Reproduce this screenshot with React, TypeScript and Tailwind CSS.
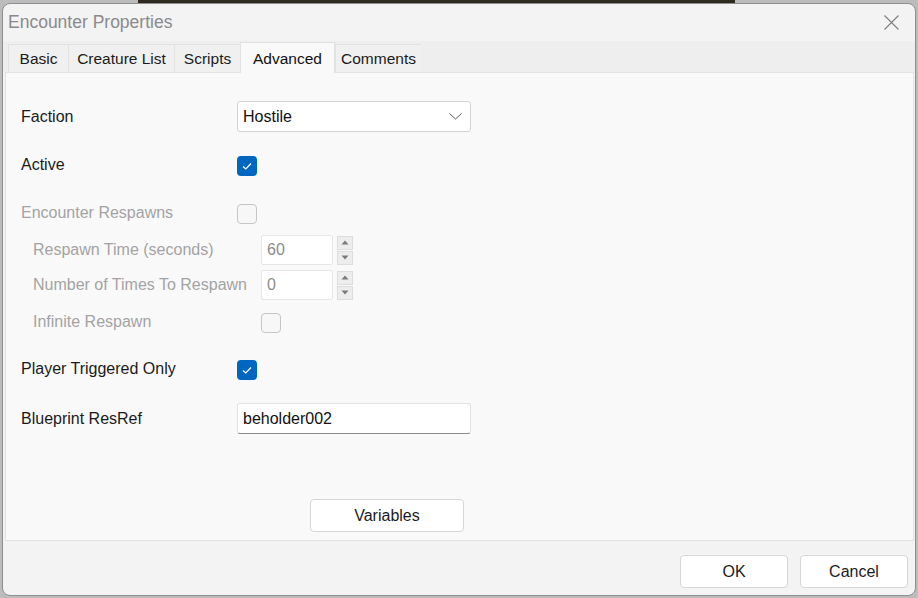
import React from "react";

const font = "font-['Liberation_Sans',Arial,sans-serif]";

function Check({ on, disabled }: { on?: boolean; disabled?: boolean }) {
  if (on) {
    return (
      <div className="w-[20px] h-[20px] rounded-[4px] bg-[#0067c0] flex items-center justify-center">
        <svg width="20" height="20" viewBox="0 0 20 20">
          <path d="M6 10.5 L8.8 13 L14 7.5" fill="none" stroke="#ffffff" strokeWidth="1.2" />
        </svg>
      </div>
    );
  }
  return (
    <div
      className={
        "w-[20px] h-[20px] rounded-[4px] border bg-[#f7f7f7] " +
        (disabled ? "border-[#c6c6c6]" : "border-[#8a8a8a]")
      }
    />
  );
}

function Spin({ value }: { value: string }) {
  return (
    <div className="flex items-center gap-[4px]">
      <div className="w-[72px] h-[30px] bg-white border border-[#e6e6e6] rounded-[2px] flex items-center pl-[5px] text-[16px] text-[#8c8c8c]">
        {value}
      </div>
      <div className="flex flex-col gap-[1px]">
        <div className="w-[16px] h-[14px] bg-[#ededed] border border-[#dddddd] flex items-center justify-center">
          <svg width="8" height="5" viewBox="0 0 8 5">
            <path d="M0.5 4.5 L4 0.5 L7.5 4.5 Z" fill="#7a7a7a" />
          </svg>
        </div>
        <div className="w-[16px] h-[14px] bg-[#ededed] border border-[#dddddd] flex items-center justify-center">
          <svg width="8" height="5" viewBox="0 0 8 5">
            <path d="M0.5 0.5 L4 4.5 L7.5 0.5 Z" fill="#7a7a7a" />
          </svg>
        </div>
      </div>
    </div>
  );
}

function Row({
  label,
  children,
  indent,
  disabled,
  check,
  className,
}: {
  label: string;
  children: React.ReactNode;
  indent?: boolean;
  disabled?: boolean;
  check?: boolean;
  className?: string;
}) {
  return (
    <div className={"flex items-center " + (className ?? "")}>
      <div
        className={
          (indent ? "w-[255px] pl-[27px] " : "w-[231px] pl-[15px] ") +
          (check ? "-top-[1px] " : "top-0 ") +
          "relative shrink-0 whitespace-nowrap text-[16px] leading-[20px] " +
          (disabled ? "text-[#a3a3a3]" : "text-[#1b1b1b]")
        }
      >
        {label}
      </div>
      {children}
    </div>
  );
}

const tabs = [
  { name: "Basic", w: "w-[60px]" },
  { name: "Creature List", w: "w-[106px]" },
  { name: "Scripts", w: "w-[66px]" },
  { name: "Advanced", w: "w-[95px]", active: true },
  { name: "Comments", w: "w-[86px]" },
];

export default function App() {
  return (
    <div className={"w-[918px] h-[598px] bg-[#bcbcbc] overflow-hidden " + font}>
      {/* strip of the picture behind the dialog */}
      <div className="h-[3px] flex">
        <div className="w-[138px]" />
        <div className="w-[597px] bg-[#2e2b1e]" />
      </div>

      <div className="ml-[2px] w-[914px] h-[593px] rounded-[8px] border border-[#8e8e8e] bg-[#f3f3f3] flex flex-col overflow-hidden">
        {/* title bar */}
        <div className="h-[37px] flex items-center justify-between pl-[5px] pr-[16px] shrink-0">
          <span className="text-[17.5px] text-[#8a8a8a]">Encounter Properties</span>
          <svg width="15" height="15" viewBox="0 0 15 15">
            <path d="M0.5 0.5 L14.5 14.5 M14.5 0.5 L0.5 14.5" stroke="#7f7f7f" strokeWidth="1.1" />
          </svg>
        </div>

        {/* tab strip */}
        <div className="h-[31px] bg-[#eeeeee] flex items-end pl-[5px] shrink-0">
          {tabs.map((t) =>
            t.active ? (
              <div
                key={t.name}
                className={
                  t.w +
                  " h-[31px] bg-[#f9f9f9] border-t border-x border-[#e2e2e2] flex items-start justify-center pt-[4px] text-[15.5px] text-[#111] relative top-[1px]"
                }
              >
                {t.name}
              </div>
            ) : (
              <div
                key={t.name}
                className={
                  t.w +
                  " h-[28px] bg-[#f0f0f0] border-t border-l border-[#e2e2e2] flex items-center justify-center pt-[1px] text-[15.5px] text-[#1b1b1b]"
                }
              >
                {t.name}
              </div>
            )
          )}
        </div>

        {/* page */}
        <div className="ml-[2px] mr-[1px] h-[469px] bg-[#f9f9f9] border border-[#e2e2e2] flex flex-col shrink-0">
          <Row label="Faction" className="mt-[28px]">
            <div className="w-[234px] h-[31px] bg-white border border-[#d3d3d3] rounded-[3px] flex items-center justify-between pl-[5px] pr-[8px] text-[16px] text-[#111]">
              <span>Hostile</span>
              <svg width="13" height="7" viewBox="0 0 13 7">
                <path d="M0.5 0.5 L6.5 6 L12.5 0.5" fill="none" stroke="#5a5a5a" strokeWidth="1" />
              </svg>
            </div>
          </Row>

          <Row label="Active" check className="mt-[24px]">
            <Check on />
          </Row>

          <Row label="Encounter Respawns" check disabled className="mt-[28px]">
            <Check disabled />
          </Row>

          <Row label="Respawn Time (seconds)" indent disabled className="mt-[11px]">
            <Spin value="60" />
          </Row>

          <Row label="Number of Times To Respawn" indent disabled className="mt-[5px]">
            <Spin value="0" />
          </Row>

          <Row label="Infinite Respawn" check indent disabled className="mt-[13px]">
            <Check disabled />
          </Row>

          <Row label="Player Triggered Only" check className="mt-[27px]">
            <Check on />
          </Row>

          <Row label="Blueprint ResRef" className="mt-[23px]">
            <div className="w-[234px] h-[31px] bg-white border border-[#e3e3e3] border-b-[#8a8a8a] rounded-[3px] flex items-center pl-[5px] text-[16px] text-[#111]">
              beholder002
            </div>
          </Row>

          <div className="mt-[65px] ml-[304px]">
            <button className="w-[154px] h-[33px] bg-white border border-[#d6d6d6] rounded-[4px] text-[16px] text-[#1b1b1b]">
              Variables
            </button>
          </div>
        </div>

        {/* footer */}
        <div className="flex-1 flex items-start justify-end gap-[12px] pt-[14px] pr-[7px]">
          <button className="w-[108px] h-[33px] bg-white border border-[#d6d6d6] rounded-[4px] text-[16px] text-[#1b1b1b]">
            OK
          </button>
          <button className="w-[108px] h-[33px] bg-white border border-[#d6d6d6] rounded-[4px] text-[16px] text-[#1b1b1b]">
            Cancel
          </button>
        </div>
      </div>
    </div>
  );
}
